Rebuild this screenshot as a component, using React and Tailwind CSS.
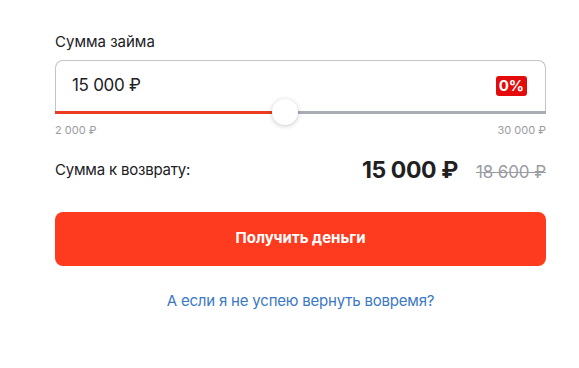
import React from "react";

const App = () => {
  return (
    <div
      className="w-[579px] h-[368px] bg-white pl-[55px] pr-[33px] pt-[31px]"
      style={{ fontFamily: "Inter, 'Noto Sans', sans-serif" }}
    >
      <div className="text-[15px] leading-[22px] text-[#21201f]">Сумма займа</div>

      <div className="relative mt-[7px] h-[54px] rounded-t-[8px] border border-b-0 border-[#c4c4c4]">
        <div className="flex h-full items-center justify-between pl-[16px] pr-[18px] pb-[4px]">
          <span className="text-[17px] tracking-[-0.3px] text-[#21201f]">15 000 ₽</span>
          <span className="rounded-[3px] bg-[#e30b0b] px-[3px] text-[15px] font-bold leading-[20px] text-white">
            0%
          </span>
        </div>
        <div className="absolute -left-px -right-px bottom-0 flex h-[3px]">
          <div className="w-[229px] bg-[#ea3b24]" />
          <div className="flex-1 bg-[#a9adb5]" />
        </div>
        <div className="absolute bottom-[-11px] left-[216px] h-[26px] w-[26px] rounded-full bg-white shadow-[0_1px_5px_rgba(0,0,0,0.22)]" />
      </div>

      <div className="mt-[9px] flex justify-between text-[11px] leading-[14px] text-[#9a9ca3]">
        <span>2 000 ₽</span>
        <span>30 000 ₽</span>
      </div>

      <div className="mt-[16px] flex items-center justify-between">
        <span className="text-[15px] tracking-[-0.2px] text-[#21201f]">Сумма к возврату:</span>
        <div className="flex items-baseline gap-[18px]">
          <span className="text-[23px] font-bold tracking-[-0.4px] text-[#21201f]">15 000 ₽</span>
          <span className="text-[17px] tracking-[-0.1px] text-[#9a9ca3] line-through">18 600 ₽</span>
        </div>
      </div>

      <button className="mt-[24px] flex h-[54px] w-full items-center justify-center rounded-[8px] bg-[#ff3b1f] text-[15px] font-bold text-white">
        Получить деньги
      </button>

      <div className="mt-[24px] text-center text-[15px] tracking-[-0.2px] text-[#3a78c3]">
        А если я не успею вернуть вовремя?
      </div>
    </div>
  );
};

export default App;
